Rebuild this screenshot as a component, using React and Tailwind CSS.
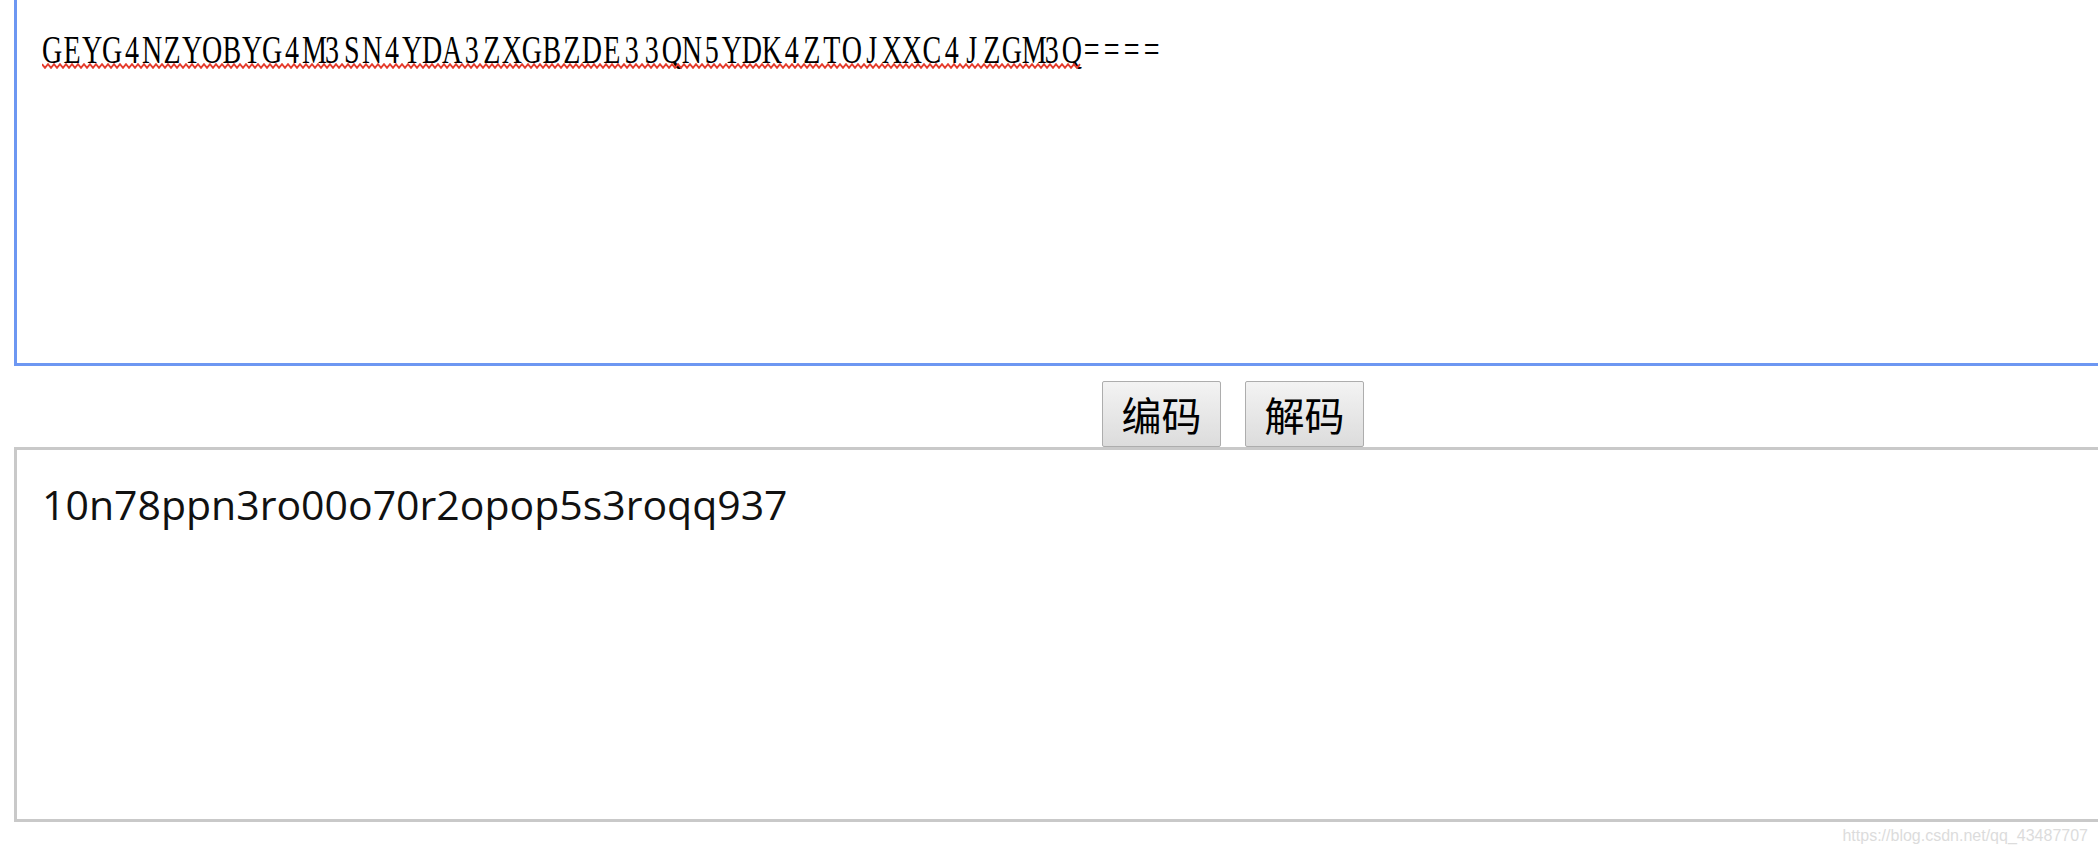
import { useState } from "react";

const INPUT = "GEYG4NZYOBYG4M3SN4YDA3ZXGBZDE33QN5YDK4ZTOJXXC4JZGM3Q";
const OUTPUT = "10n78ppn3ro00o70r2opop5s3roqq937";
const CELL = 20; // rendered width of one half-width character

// spellcheck squiggle
const Squiggle = ({ width }) => {
  const pts = [];
  for (let x = 0, up = true; x <= width; x += 3, up = !up) {
    pts.push(`${x},${up ? 1.2 : 4.8}`);
  }
  return (
    <svg width={width} height="6" className="absolute left-0 top-[36px]">
      <polyline points={pts.join(" ")} fill="none" stroke="#e53b2c" strokeWidth="1.9" />
    </svg>
  );
};

const App = () => {
  const [source] = useState(INPUT + "====");
  const [result] = useState(OUTPUT);

  // the "====" padding isn't flagged by the spellchecker, only the word before it
  const word = source.replace(/=+$/, "");

  return (
    <div className="relative w-[2098px] h-[848px] overflow-hidden bg-white">
      {/* input box (top edge scrolled off-screen) */}
      <div className="ml-[14px] h-[366px] border-l-[3px] border-b-[3px] border-[#6d97f2] pl-[25px] pt-[27px]">
        <div className="relative">
          {/* half-width serif, one 20px cell per character like the textarea's monospace font */}
          <div
            className="flex origin-left scale-x-[0.7] whitespace-nowrap text-[40px] leading-[45px] text-black"
            style={{ fontFamily: '"Liberation Serif", "Noto Sans CJK SC", serif' }}
          >
            {source.split("").map((ch, i) => (
              <span key={i} className="w-[28.57px] shrink-0 text-center">
                {ch}
              </span>
            ))}
          </div>
          <Squiggle width={word.length * CELL} />
        </div>
      </div>

      {/* buttons */}
      <div className="flex gap-[24px] ml-[1102px] mt-[15px]">
        <Btn label="编码" />
        <Btn label="解码" />
      </div>

      {/* output box */}
      <div className="ml-[14px] h-[375px] border-l-[3px] border-t-[3px] border-b-[3px] border-[#c9c9c9] pl-[25px] pt-[26px]">
        <p
          className="text-[41px] leading-[56px] text-[#111]"
          style={{ fontFamily: '"Open Sans", "Noto Sans CJK SC", sans-serif' }}
        >
          {result}
        </p>
      </div>

      {/* blog watermark */}
      <div
        className="absolute right-[10px] bottom-[2px] text-[16px] leading-[20px] text-[#dcdcdc]"
        style={{ fontFamily: '"Liberation Sans", Arial, sans-serif' }}
      >
        https://blog.csdn.net/qq_43487707
      </div>
    </div>
  );
};

const Btn = ({ label }) => (
  <button
    type="button"
    className="w-[119px] h-[66px] flex items-center justify-center rounded-[2px] border border-[#adadad] bg-gradient-to-b from-[#f3f3f3] to-[#dcdcdc] text-[40px] leading-none text-black"
    style={{ fontFamily: '"Noto Sans CJK SC", sans-serif' }}
  >
    {label}
  </button>
);

export default App;
